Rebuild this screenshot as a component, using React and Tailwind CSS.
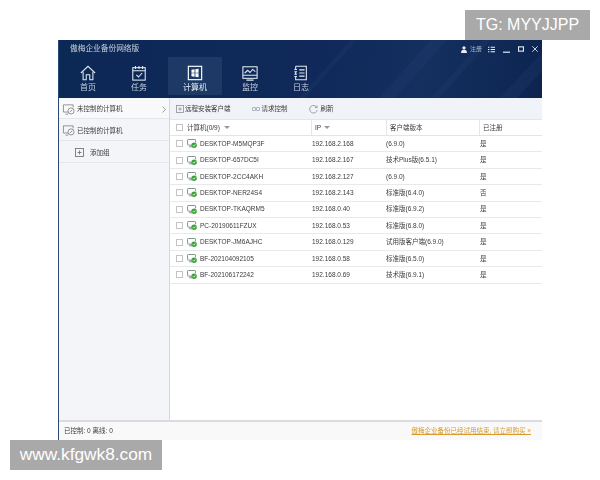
import React from 'react';

const computers = [
  { name: 'DESKTOP-M5MQP3F', ip: '192.168.2.168', version: '(6.9.0)', reg: '是' },
  { name: 'DESKTOP-657DC5I', ip: '192.168.2.167', version: '技术Plus版(6.5.1)', reg: '是' },
  { name: 'DESKTOP-2CC4AKH', ip: '192.168.2.127', version: '(6.9.0)', reg: '是' },
  { name: 'DESKTOP-NER24S4', ip: '192.168.2.143', version: '标准版(6.4.0)', reg: '否' },
  { name: 'DESKTOP-TKAQRM5', ip: '192.168.0.40', version: '标准版(6.9.2)', reg: '是' },
  { name: 'PC-20190611FZUX', ip: '192.168.0.53', version: '标准版(6.8.0)', reg: '是' },
  { name: 'DESKTOP-JM6AJHC', ip: '192.168.0.129', version: '试用版客户端(6.9.0)', reg: '是' },
  { name: 'BF-202104092105', ip: '192.168.0.58', version: '标准版(6.5.0)', reg: '是' },
  { name: 'BF-202106172242', ip: '192.168.0.69', version: '技术版(6.9.1)', reg: '是' },
];

const HomeIcon = () => (
  <svg width="16" height="16" viewBox="0 0 18 18" fill="none" stroke="#e4e9f2" strokeWidth="1.2">
    <path d="M1 9 L9 1.5 L17 9" />
    <path d="M3.5 7.5 V16.5 H7 V11 H11 V16.5 H14.5 V7.5" />
  </svg>
);

const TaskIcon = () => (
  <svg width="16" height="16" viewBox="0 0 18 18" fill="none" stroke="#e4e9f2" strokeWidth="1.2">
    <rect x="2" y="3" width="14" height="14" />
    <path d="M2 6.5 H16 M5 1 V4.5 M9 1 V4.5 M13 1 V4.5" />
    <path d="M6 11 L8.5 13.5 L12.5 9" />
  </svg>
);

const ComputerIcon = () => (
  <svg width="16" height="16" viewBox="0 0 18 18" fill="none">
    <rect x="1.5" y="1.5" width="15" height="15" stroke="#fff" strokeWidth="1.3" />
    <path d="M5 5.4 L8.5 4.9 V8.6 H5 Z M9.4 4.8 L13 4.3 V8.6 H9.4 Z M5 9.4 H8.5 V13.1 L5 12.6 Z M9.4 9.4 H13 V13.7 L9.4 13.2 Z" fill="#fff" />
  </svg>
);

const MonitorIcon = () => (
  <svg width="16" height="16" viewBox="0 0 18 18" fill="none" stroke="#e4e9f2" strokeWidth="1.2">
    <rect x="1" y="2" width="16" height="13" />
    <path d="M1 11.5 H17 M5 17 H13" />
    <path d="M3 9 L6.5 6 L9 8.5 L12 5 L15 7.5" />
  </svg>
);

const LogIcon = () => (
  <svg width="16" height="16" viewBox="0 0 18 18" fill="none" stroke="#e4e9f2" strokeWidth="1.2">
    <path d="M3 1.5 H15 V16.5 H3 V13 M3 10.5 V7.5 M3 5 V1.5" />
    <path d="M1.5 5 H4.5 M1.5 7.5 H4.5 M1.5 10.5 H4.5 M1.5 13 H4.5" />
    <path d="M7 5.5 H13 M7 9 H13 M7 12.5 H13" />
  </svg>
);

const navItems = [
  { label: '首页', icon: <HomeIcon />, width: 'w-[50px]' },
  { label: '任务', icon: <TaskIcon />, width: 'w-[52px]' },
  { label: '计算机', icon: <ComputerIcon />, width: 'w-[54px] ml-[3px] bg-[#1d3a66]', active: true },
  { label: '监控', icon: <MonitorIcon />, width: 'w-[56px]' },
  { label: '日志', icon: <LogIcon />, width: 'w-[46px]' },
];

const PcStatus = () => (
  <svg width="10" height="9" viewBox="0 0 12 11" fill="none" className="shrink-0">
    <path d="M7 7.5 H1.5 C1 7.5 0.6 7.1 0.6 6.6 V1.4 C0.6 0.9 1 0.6 1.5 0.6 H9.5 C10 0.6 10.4 0.9 10.4 1.4 V4" stroke="#6f8a78" strokeWidth="1.1" />
    <path d="M2.5 9.5 H6.5" stroke="#6f8a78" strokeWidth="1.1" />
    <circle cx="8.6" cy="7.6" r="3.3" fill="#3fa33c" />
    <path d="M7 7.6 L8.2 8.8 L10.2 6.6" stroke="#fff" strokeWidth="0.9" />
  </svg>
);

const SideComputer = () => (
  <svg width="13" height="11" viewBox="0 0 15 13" fill="none" stroke="#777" strokeWidth="0.9" className="shrink-0">
    <path d="M7 9.5 H1.5 V1 H13 V4" />
    <path d="M4 12 H7" />
    <circle cx="10.5" cy="8.2" r="3.6" />
    <path d="M9 9.6 L12 6.8" />
  </svg>
);

const PlusBox = ({ size = 9, color = '#777' }) => (
  <svg width={size} height={size} viewBox="0 0 9 9" fill="none" stroke={color} strokeWidth="0.9" className="shrink-0">
    <rect x="0.5" y="0.5" width="8" height="8" />
    <path d="M2.5 4.5 H6.5 M4.5 2.5 V6.5" />
  </svg>
);

const Checkbox = () => <span className="w-[7px] h-[7px] border border-[#c4c4c4] bg-white shrink-0" />;

function App() {
  return (
    <div className="relative w-[600px] h-[480px] bg-white pt-[40px] pl-[58px] overflow-hidden font-['Liberation_Sans','Noto_Sans_CJK_SC',sans-serif] text-[6.5px] text-[#3a3a3a]">
      <div className="w-[484px] h-[400px] flex flex-col border-l border-[#2a4a78] blur-[0.3px]">
        <header className="relative h-[58px] shrink-0 bg-[linear-gradient(100deg,#0c2855_0%,#10295a_55%,#14305f_75%,#0d2450_100%)] overflow-hidden">
          <svg className="absolute inset-0" width="484" height="58" viewBox="0 0 484 58" fill="#2a4878" fillOpacity="0.2">
            <polygon points="320,58 372,0 388,0 336,58" />
            <polygon points="372,58 424,0 432,0 380,58" />
            <polygon points="440,58 484,12 484,30 458,58" />
            <polygon points="240,58 292,0 298,0 246,58" />
          </svg>
          <div className="relative flex items-center h-[17px] pt-[1px] pl-[11px] text-[#c8d0de]">
            <span className="text-[7.7px]">傲梅企业备份网络版</span>
            <div className="ml-auto flex items-center pr-[4px] text-white">
              <svg width="6" height="7" viewBox="0 0 7 8" fill="#e8ecf3"><circle cx="3.5" cy="2" r="1.9" /><path d="M0 8 C0 5 2 4.4 3.5 4.4 C5 4.4 7 5 7 8 Z" /></svg>
              <span className="ml-[3px] text-[6px] text-[#aab4c6]">注册</span>
              <svg className="ml-[6px]" width="7" height="7" viewBox="0 0 8 7" stroke="#f2f4f8" strokeWidth="1.2"><path d="M0 1 H1.5 M3 1 H8 M0 3.5 H1.5 M3 3.5 H8 M0 6 H1.5 M3 6 H8" /></svg>
              <svg className="ml-[8px]" width="7" height="7" viewBox="0 0 7 7" stroke="#e8ecf3" strokeWidth="1.2"><path d="M0 6.2 H7" /></svg>
              <svg className="ml-[8px]" width="6" height="6" viewBox="0 0 7 7" fill="none" stroke="#e8ecf3" strokeWidth="1.3"><rect x="0.6" y="1" width="5.8" height="5" /></svg>
              <svg className="ml-[8px]" width="6" height="6" viewBox="0 0 7 7" stroke="#e8ecf3" strokeWidth="1"><path d="M0.3 0.3 L6.7 6.7 M6.7 0.3 L0.3 6.7" /></svg>
            </div>
          </div>
          <nav className="relative flex h-[38px] pl-[4px] items-stretch">
            {navItems.map((item) => (
              <div key={item.label} className={`flex flex-col items-center justify-end pb-[1px] ${item.width}`}>
                {item.icon}
                <span className={`mt-[1px] text-[8px] leading-[12px] ${item.active ? 'text-[#e8ecf3]' : 'text-[#c8d0de]'}`}>{item.label}</span>
              </div>
            ))}
          </nav>
        </header>

        <div className="flex flex-1 min-h-0">
          <aside className="w-[111px] shrink-0 bg-[#f3f5f9] border-r border-[#d5d7db]">
            <div className="h-[21px] flex items-center pt-[2px] pl-[3px] pr-[3px] gap-[2px] bg-[#f8f9fa] border-b border-[#e4e6e9]">
              <SideComputer />
              <span>未控制的计算机</span>
              <svg className="ml-auto" width="4" height="7" viewBox="0 0 4 7" fill="none" stroke="#888" strokeWidth="0.8"><path d="M0.5 0.5 L3.5 3.5 L0.5 6.5" /></svg>
            </div>
            <div className="h-[22px] flex items-center pt-[2px] pl-[3px] gap-[2px] border-b border-[#e4e6e9]">
              <SideComputer />
              <span>已控制的计算机</span>
            </div>
            <div className="h-[22px] flex items-center pt-[2px] pl-[16px] gap-[6px] border-b border-[#e4e6e9]">
              <PlusBox />
              <span>添加组</span>
            </div>
          </aside>

          <main className="flex-1 min-w-0 flex flex-col bg-white">
            <div className="h-[22px] shrink-0 flex items-center pt-[1px] pl-[6px] bg-[#f0f3f8] border-b border-[#e2e4e8]">
              <PlusBox size={8} color="#8a8f96" />
              <span className="ml-[1px]">远程安装客户端</span>
              <svg className="ml-[21px]" width="8" height="4" viewBox="0 0 10 5" fill="none" stroke="#7c8fa8" strokeWidth="0.9"><rect x="0.5" y="0.5" width="4" height="4" rx="1" /><rect x="5.5" y="0.5" width="4" height="4" rx="1" /></svg>
              <span className="ml-[2px]">请求控制</span>
              <svg className="ml-[21px]" width="9" height="9" viewBox="0 0 9 9" fill="none" stroke="#8a8f96" strokeWidth="0.8"><path d="M7.8 2.4 A3.8 3.8 0 1 0 8.2 5" /><path d="M8 0.5 V2.6 H5.9" /></svg>
              <span className="ml-[3px]">刷新</span>
            </div>

            <div className="h-[16px] shrink-0 flex items-center border-b border-[#e2e4e8]">
              <div className="w-[141px] flex items-center pl-[6px] gap-[4px]">
                <Checkbox />
                <span>计算机(0/9)</span>
                <span className="w-0 h-0 border-x-[3px] border-x-transparent border-t-[3px] border-t-[#999]" />
              </div>
              <div className="w-[75px] h-full flex items-center pl-[3px] gap-[3px] border-l border-[#e6e7ea]">
                <span>IP</span>
                <span className="w-0 h-0 border-x-[3px] border-x-transparent border-t-[3px] border-t-[#999]" />
              </div>
              <div className="w-[93px] h-full flex items-center pl-[3px] border-l border-[#e6e7ea]">客户端版本</div>
              <div className="flex-1 h-full flex items-center pl-[3px] border-l border-[#e6e7ea]">已注册</div>
            </div>

            {computers.map((pc) => (
              <div key={pc.name} className="h-[16.4px] shrink-0 flex items-center border-b border-[#e8e9ec]">
                <div className="w-[142px] flex items-center pl-[6px] gap-[4px]">
                  <Checkbox />
                  <PcStatus />
                  <span className="-ml-[1px]">{pc.name}</span>
                </div>
                <div className="w-[74px]">{pc.ip}</div>
                <div className="w-[94px]">{pc.version}</div>
                <div className="flex-1">{pc.reg}</div>
              </div>
            ))}
          </main>
        </div>

        <footer className="h-[20px] shrink-0 flex items-center pl-[5px] pr-[11px] bg-[#f9f9f9] border-t-2 border-[#d9dbde]">
          <span>已控制: 0 离线: 0</span>
          <span className="ml-auto text-[#d99a2b] underline">傲梅企业备份已经试用结束, 请立即购买 »</span>
        </footer>
      </div>

      <div className="absolute left-[465px] top-[10px] w-[125px] h-[30px] bg-[#a9a9a9] text-white text-[16px] flex items-center justify-center">TG: MYYJJPP</div>
      <div className="absolute left-[10px] top-[440px] w-[152px] h-[30px] bg-[#a9a9a9] text-white text-[17.3px] flex items-center justify-center">www.kfgwk8.com</div>
    </div>
  );
}

export default App;
